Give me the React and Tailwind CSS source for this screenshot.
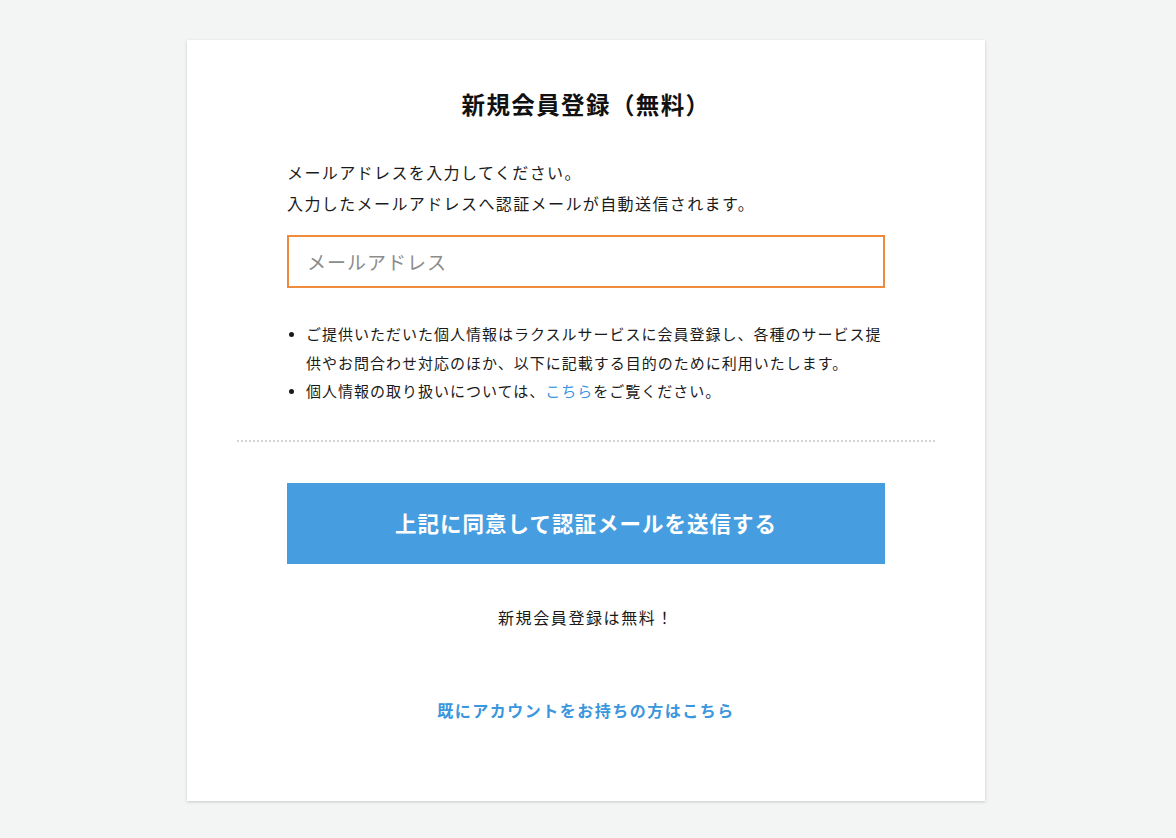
export default function App() {
  const font = { fontFamily: '"Noto Sans CJK JP", "Noto Sans", sans-serif' };
  const Dot = () => (
    <span className="flex h-[28.5px] w-[19px] shrink-0 items-center pl-[2px]">
      <span className="block h-[5px] w-[5px] rounded-full bg-[#1a1a1a]" />
    </span>
  );
  return (
    <div className="min-h-[838px] w-full bg-[#f3f4f4] pt-[40px] pb-[37px]" style={font}>
      <div className="ml-[187px] w-[798px] bg-white px-[50px] pt-[46px] pb-[79px] shadow-[0_1px_3px_rgba(0,0,0,0.18)] text-[#1a1a1a]">
        <h1 className="text-center text-[23.5px] font-bold leading-[36px] tracking-[1.4px] text-[#111]">新規会員登録（無料）</h1>
        <div className="px-[50px]">
          <p className="mt-[35px] text-[16px] leading-[31px] tracking-[1.4px]">
            メールアドレスを入力してください。
            <br />
            入力したメールアドレスへ認証メールが自動送信されます。
          </p>
          <input
            type="text"
            placeholder="メールアドレス"
            className="mt-[16px] block h-[53px] w-full border-2 border-[#f08a3c] px-[18px] text-[19px] tracking-[1px] outline-none placeholder:text-[#8c8c8c]"
            style={font}
          />
          <ul className="mt-[32px] text-[15px] leading-[28.5px] tracking-[1px]">
            <li className="flex">
              <Dot />
              <span>ご提供いただいた個人情報はラクスルサービスに会員登録し、各種のサービス提供やお問合わせ対応のほか、以下に記載する目的のために利用いたします。</span>
            </li>
            <li className="flex">
              <Dot />
              <span>
                個人情報の取り扱いについては、<a className="text-[#3a96dd]">こちら</a>をご覧ください。
              </span>
            </li>
          </ul>
        </div>
        <div className="mt-[34px] border-t-2 border-dotted border-[#d4d4d4]" />
        <div className="px-[50px]">
          <button
            className="mt-[41px] flex h-[81px] w-full items-center justify-center bg-[#469ee0] text-[21.5px] font-bold tracking-[1px] text-white"
            style={font}
          >
            上記に同意して認証メールを送信する
          </button>
          <p className="mt-[41px] text-center text-[16px] leading-[24px] tracking-[1.6px]">新規会員登録は無料！</p>
          <p className="mt-[69px] text-center text-[16px] font-bold leading-[24px] tracking-[1.5px] text-[#3a96dd]">
            既にアカウントをお持ちの方はこちら
          </p>
        </div>
      </div>
    </div>
  );
}
